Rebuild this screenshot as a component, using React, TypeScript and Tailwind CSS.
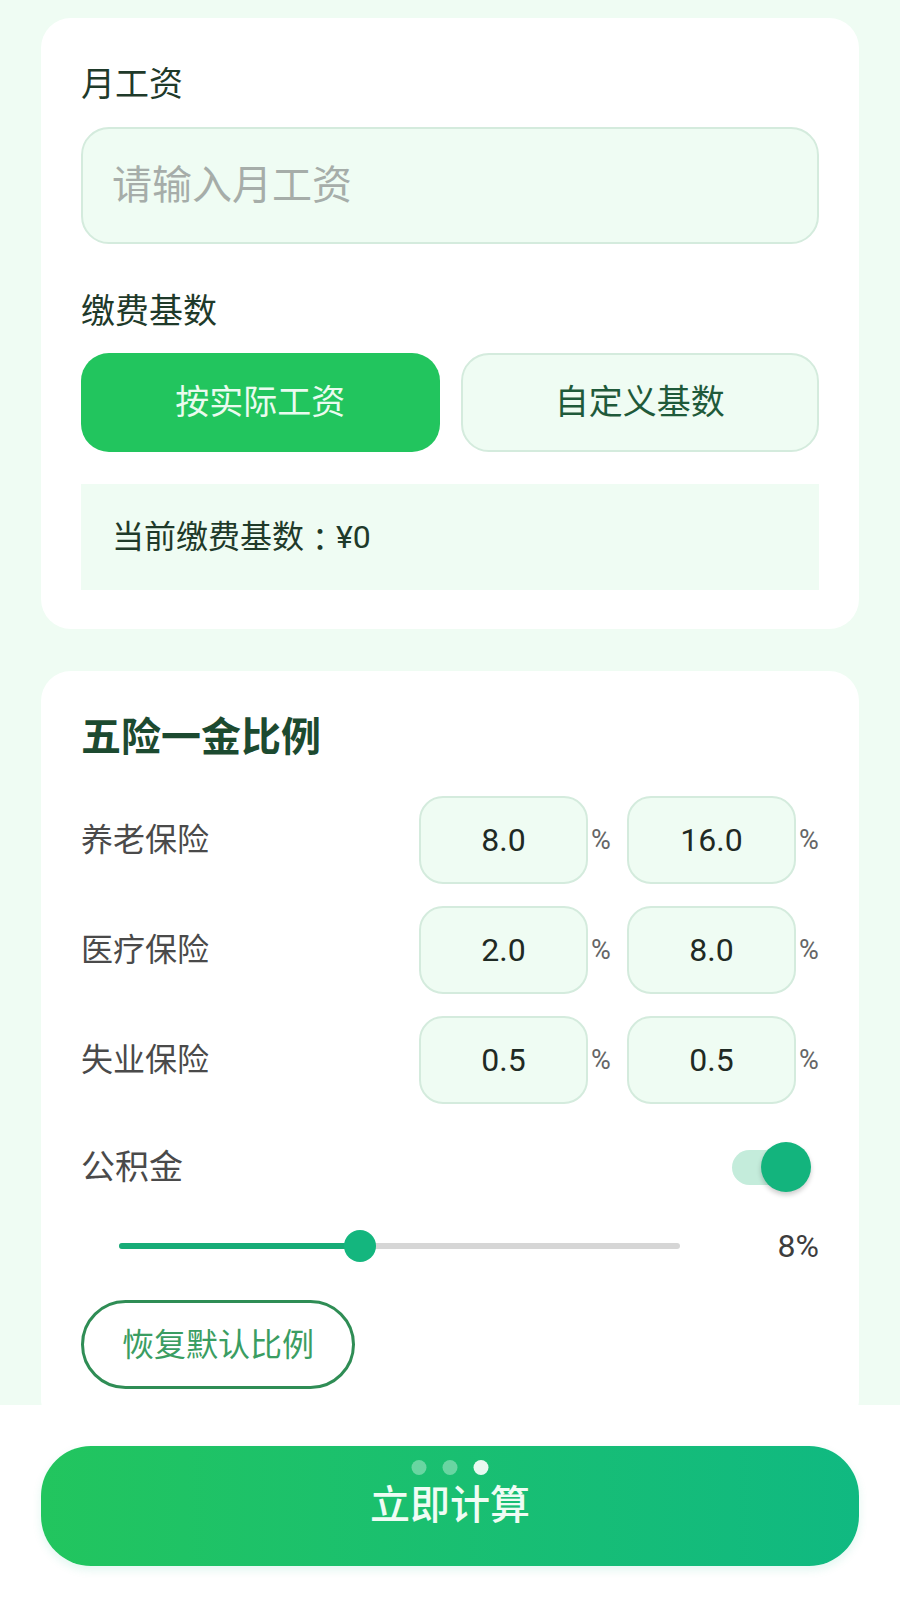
import { useState } from 'react';

const rates = [
    { name: '养老保险', personal: '8.0', company: '16.0' },
    { name: '医疗保险', personal: '2.0', company: '8.0' },
    { name: '失业保险', personal: '0.5', company: '0.5' },
];

function RateBox({ value }: { value: string }) {
    return (
        <div className="w-[169px] h-[88px] rounded-[24px] border-2 border-[#d4ebdd] bg-[#effcf3] flex items-center justify-center text-[32px] text-[#1f2a24]">
            {value}
        </div>
    );
}

export default function App() {
    const [mode, setMode] = useState<'actual' | 'custom'>('actual');
    const [fund] = useState(8);

    return (
        <div className="w-full h-[1600px] bg-[#effcf3] flex flex-col overflow-hidden font-['Roboto','Noto_Sans_CJK_SC',sans-serif]">
            <div className="flex-1 overflow-hidden px-[41px] pt-[18px] flex flex-col gap-[42px]">
                {/* 基本信息 */}
                <div className="bg-white rounded-[30px] px-[40px] pt-[46px] pb-[39px]">
                    <div className="text-[34px] leading-[40px] text-[#1f3a2a]">月工资</div>
                    <input
                        className="mt-[23px] w-full h-[117px] rounded-[28px] border-2 border-[#d4ebdd] bg-[#effcf3] px-[29px] text-[40px] text-[#1f2a24] outline-none placeholder:text-[#a6ada9]"
                        placeholder="请输入月工资"
                    />
                    <div className="mt-[47px] text-[34px] leading-[40px] text-[#1f3a2a]">缴费基数</div>
                    <div className="mt-[22px] grid grid-cols-2 gap-[21px]">
                        <button
                            onClick={() => setMode('actual')}
                            className={mode === 'actual'
                                ? 'h-[99px] rounded-[28px] bg-[#22c55e] text-[34px] text-[#eafbef]'
                                : 'h-[99px] rounded-[28px] border-2 border-[#d4ebdd] bg-[#effcf3] text-[34px] text-[#1f5a3a]'}
                        >
                            按实际工资
                        </button>
                        <button
                            onClick={() => setMode('custom')}
                            className={mode === 'custom'
                                ? 'h-[99px] rounded-[28px] bg-[#22c55e] text-[34px] text-[#eafbef]'
                                : 'h-[99px] rounded-[28px] border-2 border-[#d4ebdd] bg-[#effcf3] text-[34px] text-[#1f5a3a]'}
                        >
                            自定义基数
                        </button>
                    </div>
                    <div className="mt-[32px] h-[106px] bg-[#effcf3] px-[31px] flex items-center text-[32px] text-[#1f3a2a]">
                        当前缴费基数<span className="font-['Noto_Sans_CJK_TC',sans-serif]">：</span>¥0
                    </div>
                </div>

                {/* 五险一金比例 */}
                <div className="bg-white rounded-[30px] px-[40px] pt-[44px] pb-[40px]">
                    <div className="text-[40px] leading-[46px] font-bold text-[#1c4a30]">五险一金比例</div>
                    <div className="mt-[35px] flex flex-col gap-[22px]">
                        {rates.map(r => (
                            <div key={r.name} className="h-[88px] flex items-center justify-between">
                                <span className="text-[32px] text-[#4a4a4a]">{r.name}</span>
                                <div className="flex items-center">
                                    <RateBox value={r.personal} />
                                    <span className="ml-[3px] w-[20px] text-[27px] text-[#666]">%</span>
                                    <div className="ml-[16px]">
                                        <RateBox value={r.company} />
                                    </div>
                                    <span className="ml-[3px] w-[20px] text-[27px] text-[#666]">%</span>
                                </div>
                            </div>
                        ))}
                    </div>

                    <div className="mt-[38px] h-[50px] flex items-center justify-between">
                        <span className="text-[34px] text-[#4a4a4a]">公积金</span>
                        <div className="relative w-[79px] h-[50px] mr-[8px]">
                            <div className="absolute left-0 top-[8px] w-[70px] h-[35px] rounded-full bg-[#c4ecdb]" />
                            <div className="absolute right-0 top-0 w-[50px] h-[50px] rounded-full bg-[#13b47d] shadow-[0_3px_5px_rgba(0,0,0,0.2)]" />
                        </div>
                    </div>

                    <div className="mt-[34px] h-[40px] flex items-center justify-between">
                        <div className="relative ml-[38px] w-[561px] h-[32px] flex items-center">
                            <div className="w-full h-[6px] rounded-full bg-[#d6d6d6]" />
                            <div className="absolute left-0 top-[13px] h-[6px] w-[241px] rounded-full bg-[#17ac77]" />
                            <div className="absolute left-[225px] top-0 w-[32px] h-[32px] rounded-full bg-[#14b67e]" />
                        </div>
                        <span className="text-[32px] text-[#3d3d3d]">{fund}%</span>
                    </div>

                    <button className="mt-[34px] w-[274px] h-[89px] rounded-full border-[3px] border-[#2f8d55] text-[32px] text-[#3a9d62]">
                        恢复默认比例
                    </button>
                </div>
            </div>

            {/* 底部按钮 */}
            <div className="h-[195px] shrink-0 bg-white px-[41px] pt-[41px]">
                <button className="relative w-full h-[120px] rounded-[50px] bg-gradient-to-r from-[#22c55e] to-[#10b981] text-[40px] font-medium text-[#effcf4] shadow-[0_4px_10px_rgba(16,185,129,0.12)]">
                    <div className="absolute top-[14px] left-1/2 -translate-x-1/2 flex gap-[16px]">
                        <span className="w-[15px] h-[15px] rounded-full bg-white/35" />
                        <span className="w-[15px] h-[15px] rounded-full bg-white/35" />
                        <span className="w-[15px] h-[15px] rounded-full bg-white/90" />
                    </div>
                    立即计算
                </button>
            </div>
        </div>
    );
}
